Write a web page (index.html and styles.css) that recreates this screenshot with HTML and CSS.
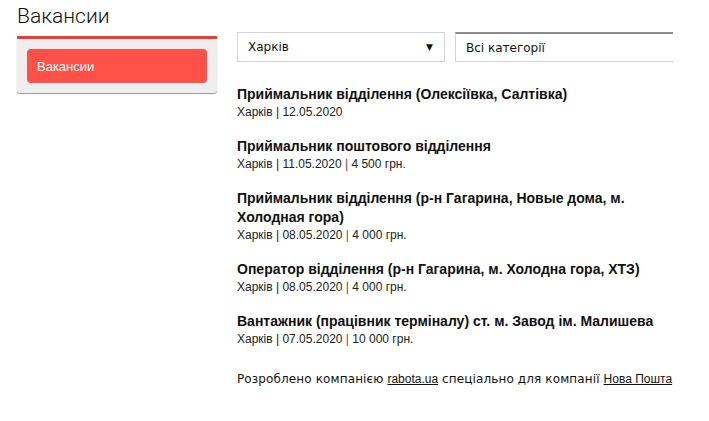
FILE: index.html
```html
<!DOCTYPE html>
<html>
  <head>
    <title>Вакансии</title>
    <link rel="stylesheet" href="styles.css">
  </head>
  <body>
    <div class="page">
      <h1 class="page-title">Вакансии</h1>
      <div class="layout">
        <div class="sidebar">
          <a class="sidebar-link" href="#">Вакансии</a>
        </div>
        <div class="main">
          <div class="filters">
            <div class="select city">
              <span>Харків</span>
              <span class="arrow">&#9660;</span>
            </div>
            <div class="select category">
              <span>Всі категорії</span>
            </div>
          </div>
          <div class="jobs">
            <div class="job">
              <div class="job-title">Приймальник відділення (Олексіївка, Салтівка)</div>
              <div class="job-meta">Харків | 12.05.2020</div>
            </div>
            <div class="job">
              <div class="job-title">Приймальник поштового відділення</div>
              <div class="job-meta">Харків | 11.05.2020 <span class="sep">|</span> 4 500 грн.</div>
            </div>
            <div class="job">
              <div class="job-title">Приймальник відділення (р-н Гагарина, Новые дома, м. Холодная гора)</div>
              <div class="job-meta">Харків | 08.05.2020 <span class="sep">|</span> 4 000 грн.</div>
            </div>
            <div class="job">
              <div class="job-title">Оператор відділення (р-н Гагарина, м. Холодна гора, ХТЗ)</div>
              <div class="job-meta">Харків | 08.05.2020 <span class="sep">|</span> 4 000 грн.</div>
            </div>
            <div class="job">
              <div class="job-title">Вантажник (працівник терміналу) ст. м. Завод ім. Малишева</div>
              <div class="job-meta">Харків | 07.05.2020 <span class="sep">|</span> 10 000 грн.</div>
            </div>
          </div>
          <div class="footer">
            Розроблено компанією <a href="#">rabota.ua</a> спеціально для компанії <a href="#">Нова Пошта</a>
          </div>
        </div>
      </div>
    </div>
  </body>
</html>
```

FILE: styles.css
```css
body {
  margin: 0;
  font-family: "Liberation Sans", Arial, sans-serif;
  color: #1a1a1a;
  background: #fff;
}
.page {
  padding: 0 0 0 17px;
}
.page-title {
  margin: 0;
  padding-top: 3px;
  height: 29px;
  font-family: Roboto, "Liberation Sans", sans-serif;
  font-size: 21px;
  font-weight: 300;
  line-height: 26px;
  color: #111;
}
.layout {
  display: flex;
  gap: 20px;
}
.sidebar {
  width: 200px;
  margin-top: 4px;
  align-self: flex-start;
  box-sizing: border-box;
  padding: 10px 10px 10px;
  background: #eeeeee;
  border-top: 3px solid #f03a2e;
  border-radius: 0 0 3px 3px;
  box-shadow: 0 1px 1px #9a9a9a;
}
.sidebar-link {
  display: block;
  height: 34px;
  line-height: 35px;
  padding-left: 10px;
  background: #ff5148;
  border-radius: 4px;
  color: #fff;
  font-size: 13px;
  text-decoration: none;
}
.main {
  width: 436px;
  overflow: hidden;
}
.filters {
  display: flex;
  gap: 10px;
}
.select {
  box-sizing: border-box;
  flex-shrink: 0;
  height: 30px;
  display: flex;
  align-items: center;
  justify-content: space-between;
  padding: 0 10px;
  border: 1px solid #d4d4d4;
  font-family: "DejaVu Sans", Verdana, sans-serif;
  font-size: 12px;
  color: #111;
  background: #fff;
}
.city {
  width: 208px;
}
.category {
  width: 240px;
  border-top: 2px solid #8c8c8c;
}
.arrow {
  font-size: 9px;
  margin-right: 1px;
}
.jobs {
  margin-top: 23px;
}
.job {
  margin-bottom: 16px;
}
.job-title {
  font-size: 14px;
  font-weight: bold;
  line-height: 19px;
  color: #111;
}
.job-meta {
  font-size: 12px;
  line-height: 17px;
  color: #222;
}
.sep {
  color: #a0342a;
}
.footer {
  padding-top: 6px;
  font-family: "DejaVu Sans", Verdana, sans-serif;
  font-size: 12px;
  letter-spacing: 0.12px;
  line-height: 18px;
  color: #111;
  white-space: nowrap;
}
.footer a {
  font-family: "Liberation Sans", Arial, sans-serif;
  font-size: 12px;
  letter-spacing: 0;
  color: #111;
}
```
